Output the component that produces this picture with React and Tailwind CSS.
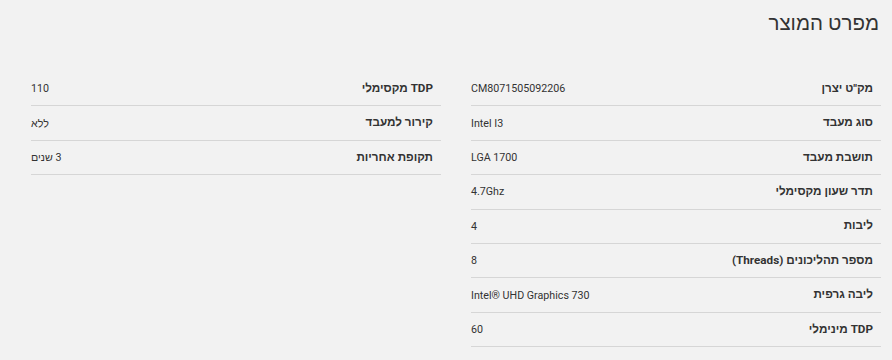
const rightSpecs = [
  { label: 'מק"ט יצרן', value: "CM8071505092206" },
  { label: "סוג מעבד", value: "Intel I3" },
  { label: "תושבת מעבד", value: "LGA 1700" },
  { label: "תדר שעון מקסימלי", value: "4.7Ghz" },
  { label: "ליבות", value: "4" },
  { label: "מספר תהליכונים (Threads)", value: "8" },
  { label: "ליבה גרפית", value: "Intel® UHD Graphics 730" },
  { label: "TDP מינימלי", value: "60" },
];

const leftSpecs = [
  { label: "TDP מקסימלי", value: "110" },
  { label: "קירור למעבד", value: "ללא" },
  { label: "תקופת אחריות", value: "3 שנים" },
];

function SpecTable({ rows }) {
  return (
    <div className="flex flex-col">
      {rows.map((r) => (
        <div
          key={r.label}
          className="h-[34.4px] flex items-center justify-between border-b border-[#d6d6d6] pr-2"
        >
          <span className="text-[11.7px] font-bold text-[#333]">{r.label}</span>
          <span dir="ltr" className="text-[10.7px] text-[#333] pt-px">
            <bdi>{r.value}</bdi>
          </span>
        </div>
      ))}
    </div>
  );
}

export default function App() {
  return (
    <div
      dir="rtl"
      className="w-[892px] h-[360px] bg-[#f2f2f2] pl-[31px] pr-[11px] pt-[9px] overflow-hidden"
      style={{ fontFamily: 'Roboto, "Liberation Sans", "Open Sans", sans-serif' }}
    >
      <h2 className="text-[20.5px] text-[#333] leading-[28px] pr-[2px]">מפרט המוצר</h2>
      <div className="grid grid-cols-2 gap-x-[30px] mt-[35px]">
        <SpecTable rows={rightSpecs} />
        <div>
          <SpecTable rows={leftSpecs} />
        </div>
      </div>
    </div>
  );
}
